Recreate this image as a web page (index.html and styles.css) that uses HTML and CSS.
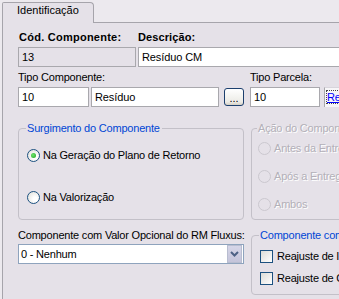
FILE: index.html
```html
<!DOCTYPE html>
<html lang="pt">
<head>
<meta charset="utf-8">
<link rel="stylesheet" href="styles.css">
</head>
<body>
<div class="window">
  <div class="tabstrip">
    <div class="tab">Identificação</div>
    <div class="tabfill"></div>
  </div>
  <div class="panel">
    <div class="row row-top">
      <div class="field f-cod">
        <div class="lbl bold b-cod">Cód. Componente:</div>
        <input class="tb ro" type="text" value="13" readonly>
      </div>
      <div class="field f-desc">
        <div class="lbl bold b-desc">Descrição:</div>
        <input class="tb" type="text" value="Resíduo CM">
      </div>
    </div>

    <div class="row row-tipo">
      <div class="field f-tipo">
        <div class="lbl">Tipo Componente:</div>
        <div class="inline">
          <input class="tb w-code" type="text" value="10">
          <input class="tb w-name" type="text" value="Resíduo">
          <button class="btn-dots" type="button">...</button>
        </div>
      </div>
      <div class="field f-parcela">
        <div class="lbl">Tipo Parcela:</div>
        <div class="inline">
          <input class="tb w-parc" type="text" value="10">
          <div class="linkbox"><a class="lnk" href="#">Resíduo</a></div>
        </div>
      </div>
    </div>

    <div class="grid-groups">
      <fieldset class="group g-surg">
        <legend>Surgimento do Componente</legend>
        <div class="opt"><span class="radio checked"></span><span>Na Geração do Plano de Retorno</span></div>
        <div class="opt"><span class="radio"></span><span>Na Valorização</span></div>
      </fieldset>
      <fieldset class="group g-acao disabled">
        <legend>Ação do Componente</legend>
        <div class="opt"><span class="radio"></span><span>Antes da Entrega</span></div>
        <div class="opt"><span class="radio"></span><span>Após a Entrega</span></div>
        <div class="opt"><span class="radio"></span><span>Ambos</span></div>
      </fieldset>

      <div class="field f-opc">
        <div class="lbl">Componente com Valor Opcional do RM Fluxus:</div>
        <div class="combo">
          <span class="combo-text">0 - Nenhum</span>
          <span class="combo-btn">
            <svg width="9" height="6" viewBox="0 0 9 6"><path d="M1 1 L4.5 4.5 L8 1" fill="none" stroke="#4d6185" stroke-width="2"/></svg>
          </span>
        </div>
      </div>
      <fieldset class="group g-reaj">
        <legend>Componente com Reajuste</legend>
        <div class="opt chk"><span class="check"></span><span>Reajuste de IPCA</span></div>
        <div class="opt chk"><span class="check"></span><span>Reajuste de Contrato</span></div>
      </fieldset>
    </div>
  </div>
</div>
</body>
</html>
```
FILE: styles.css
```css
html, body {
  margin: 0;
  padding: 0;
}
body {
  width: 339px;
  height: 299px;
  overflow: hidden;
  background: #ece9ee;
  font-family: "Liberation Sans", Arial, sans-serif;
  font-size: 11px;
  line-height: 13px;
  letter-spacing: -0.2px;
  color: #000;
}
.window {
  width: 600px;
  height: 299px;
}
.tabstrip {
  display: flex;
  height: 23px;
}
.tab {
  margin-top: 2px;
  margin-left: 2px;
  width: 92px;
  height: 21px;
  padding: 1px 0 0 14px;
  box-sizing: border-box;
  border: 1px solid #a6a4ab;
  border-bottom: none;
  border-radius: 2px 4px 0 0;
  background: #e5e1e8;
  letter-spacing: 0;
}
.tabfill {
  flex: 1;
  border-bottom: 1px solid #a6a4ab;
}
.panel {
  margin-left: 2px;
  border-left: 1px solid #a6a4ab;
  background: #e5e1e8;
  height: 276px;
  padding: 8px 0 0 15px;
  box-sizing: border-box;
}
.row {
  display: flex;
}
.field {
  display: flex;
  flex-direction: column;
}
.lbl {
  height: 13px;
  margin-bottom: 3px;
  white-space: nowrap;
}
.bold {
  font-weight: bold;
}
.b-cod {
  margin-left: 1px;
  letter-spacing: 0.25px;
}
.b-desc {
  letter-spacing: 0.1px;
}
.tb {
  box-sizing: border-box;
  height: 20px;
  margin: 0;
  padding: 0 3px;
  border: 1px solid #a9a8ad;
  background: #fff;
  font-family: "Liberation Sans", Arial, sans-serif;
  font-size: 11px;
  letter-spacing: -0.1px;
  color: #000;
  outline: none;
}
.tb.ro {
  background: #e5e1e8;
}
.f-cod {
  width: 118px;
}
.f-cod .tb {
  width: 118px;
}
.f-desc {
  margin-left: 2px;
}
.f-desc .tb {
  width: 260px;
}
.row-tipo {
  margin-top: 4px;
}
.inline {
  display: flex;
  align-items: flex-start;
}
.f-tipo {
  width: 226px;
}
.w-code {
  width: 71px;
}
.w-name {
  width: 128px;
  margin-left: 2px;
}
.btn-dots {
  box-sizing: border-box;
  width: 20px;
  height: 18px;
  margin: 1px 0 0 5px;
  padding: 0 0 2px;
  border: 1px solid #1c3f6e;
  border-radius: 3px;
  background: linear-gradient(#ffffff, #ecebe6 80%, #d6d0c5);
  font-family: "Liberation Sans", Arial, sans-serif;
  font-size: 11px;
  line-height: 10px;
  display: flex;
  align-items: flex-end;
  justify-content: center;
  color: #000;
}
.f-parcela {
  margin-left: 6px;
}
.w-parc {
  width: 70px;
}
.linkbox {
  box-sizing: border-box;
  margin-left: 4px;
  width: 80px;
  height: 20px;
  border-left: 1px solid #a9a8ad;
  border-top: 1px solid #d8d5dc;
  background: #f7f6f8;
  padding: 3px 0 0 2px;
}
.lnk {
  color: #0000ff;
  text-decoration: underline;
  outline: 1px dotted #444;
  outline-offset: 0;
}
.grid-groups {
  display: grid;
  grid-template-columns: 226px 200px;
  column-gap: 7px;
  margin-top: 15px;
}
.group {
  margin: 0;
  padding: 0 0 0 8px;
  border: 1px solid #c3c0c8;
  border-radius: 4px;
  min-width: 0;
}
.group legend {
  padding: 0 2px 0 1px;
  margin-left: -1px;
  color: #0046d5;
  line-height: 13px;
  white-space: nowrap;
}
.opt {
  display: flex;
  align-items: center;
  height: 16px;
  white-space: nowrap;
}
.g-surg {
  padding-top: 12px;
  padding-bottom: 14px;
  display: flex;
  flex-direction: column;
  gap: 26px;
}
.g-acao {
  padding-top: 5px;
  padding-left: 6px;
  display: flex;
  flex-direction: column;
  gap: 12px;
}
.radio {
  box-sizing: border-box;
  width: 13px;
  height: 13px;
  margin-right: 3px;
  border-radius: 50%;
  border: 1px solid #1c5180;
  background: radial-gradient(circle at 65% 65%, #ffffff 20%, #dcdcd6 100%);
  position: relative;
  flex: none;
}
.radio.checked::after {
  content: "";
  position: absolute;
  left: 3px;
  top: 3px;
  width: 5px;
  height: 5px;
  border-radius: 50%;
  background: radial-gradient(circle at 40% 40%, #6ee66e, #21a121);
}
.disabled legend,
.disabled .opt span:last-child {
  color: #b3b0b8;
  text-shadow: 1px 1px 0 #ffffff;
}
.disabled .radio {
  border-color: #cbc8cf;
  background: #e5e1e8;
}
.f-opc {
  margin-top: 9px;
}
.f-opc .lbl {
  margin-bottom: 2px;
}
.combo {
  box-sizing: border-box;
  width: 226px;
  height: 20px;
  border: 1px solid #8ea3bd;
  background: #fff;
  display: flex;
  align-items: center;
  padding: 0 1px 0 2px;
}
.combo-text {
  flex: 1;
}
.combo-btn {
  box-sizing: border-box;
  width: 15px;
  height: 18px;
  background: linear-gradient(#d6d6e8, #c4c4da);
  border: 1px solid #b8bdd0;
  display: flex;
  align-items: center;
  justify-content: center;
}
.g-reaj {
  margin-top: 9px;
  padding-top: 7px;
  padding-bottom: 8px;
  display: flex;
  flex-direction: column;
  gap: 7px;
}
.opt.chk {
  height: 15px;
}
.check {
  box-sizing: border-box;
  width: 13px;
  height: 13px;
  margin-right: 4px;
  border: 1px solid #1c5180;
  background: linear-gradient(135deg, #dcdcd7, #ffffff);
  flex: none;
}
```
